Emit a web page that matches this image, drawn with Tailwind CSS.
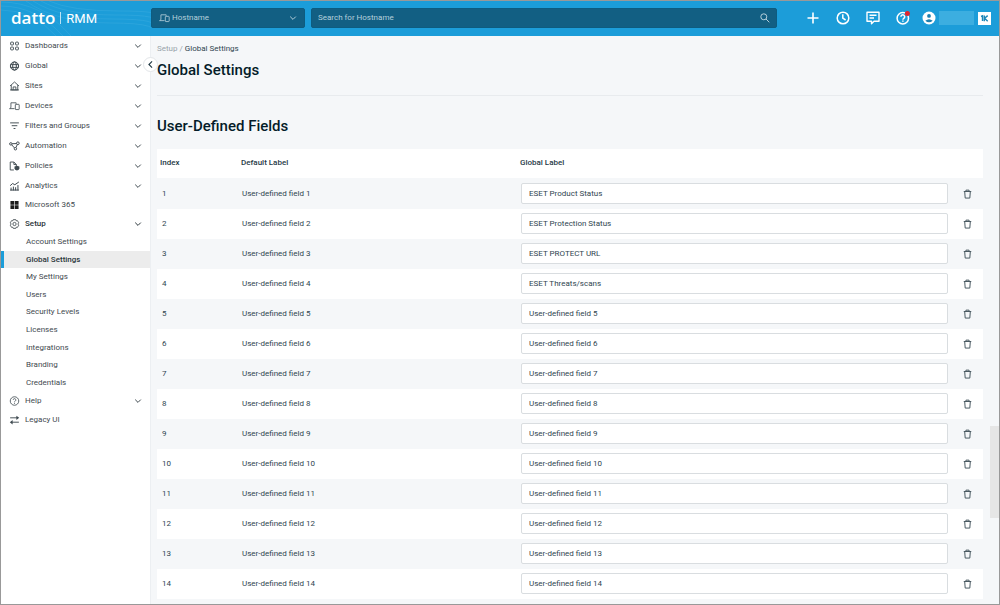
<!DOCTYPE html>
<html lang="en">
<head>
<meta charset="utf-8">
<title>Datto RMM - Global Settings</title>
<script src="https://cdn.jsdelivr.net/npm/@tailwindcss/browser@4"></script>
</head>
<body class="font-['Roboto',sans-serif] text-[8px] leading-[12px] text-[#2f4550]">
<svg class="hidden" xmlns="http://www.w3.org/2000/svg">
  <symbol id="chev" viewBox="0 0 8 8"><path d="M1.2 2.6 4 5.4 6.800 2.600" fill="none" stroke="currentColor" stroke-width="1"/></symbol>
  <symbol id="dash" viewBox="0 0 16 16"><g fill="none" stroke="currentColor" stroke-width="1.500"><rect x="1.800" y="1.800" width="4.500" height="4.500" rx="1"/><rect x="9.700" y="1.800" width="4.500" height="4.500" rx="1"/><rect x="1.800" y="9.700" width="4.500" height="4.500" rx="1"/><rect x="9.700" y="9.700" width="4.500" height="4.500" rx="1"/></g></symbol>
  <symbol id="globe" viewBox="0 0 16 16"><g fill="none" stroke="currentColor" stroke-width="1.600"><circle cx="8" cy="8" r="6.600"/><ellipse cx="8" cy="8" rx="3" ry="6.600"/><path d="M1.500 5.800h13M1.500 10.200h13"/></g></symbol>
  <symbol id="home" viewBox="0 0 16 16"><g fill="none" stroke="currentColor" stroke-width="1.400"><path d="M.8 8 8 1.600 15.200 8M2.800 6.500V14.300H13.200V6.500M.8 14.300h14.400"/><path d="M5.800 14v-4.500h4.400V14"/></g></symbol>
  <symbol id="devices" viewBox="0 0 20 16"><g fill="none" stroke="currentColor" stroke-width="1.500"><path d="M13 4V2.200H3.500V11M1 12.800h9M3.500 11l-2.500 1.800"/><rect x="11.500" y="5" width="7" height="9.500" rx="1"/></g></symbol>
  <symbol id="filter" viewBox="0 0 16 16"><path d="M1 3h14M3.500 7.500h9M6.500 12h3" fill="none" stroke="currentColor" stroke-width="1.500"/></symbol>
  <symbol id="auto" viewBox="0 0 18 16"><g fill="none" stroke="currentColor" stroke-width="1.600"><circle cx="3" cy="4.500" r="2"/><circle cx="14.500" cy="3.500" r="2.200"/><circle cx="10.500" cy="12.500" r="2"/><path d="M5 4.300 12.300 4M4.300 6 9 11.200M13.600 5.700 11.300 10.600"/></g></symbol>
  <symbol id="policy" viewBox="0 0 18 16"><g fill="none" stroke="currentColor" stroke-width="1.500"><path d="M8 14.500H2V1.500h6l4 4V8M8 1.500v4h4"/></g><path d="M13 7.500 17 9v2.500q0 3-4 4-4-1-4-4V9z" fill="currentColor"/></symbol>
  <symbol id="chart" viewBox="0 0 16 16"><g fill="none" stroke="currentColor" stroke-width="1.600"><path d="M1 7.500 5 4 8.500 6 15 1.500M2.500 10.500v4.500M6.200 9v6M9.800 10v5M13.500 6.500V15M1 14.500h14"/></g></symbol>
  <symbol id="win" viewBox="0 0 16 16"><path d="M1.500 1.500h6v6h-6zM8.500 1.500h6v6h-6zM1.500 8.500h6v6h-6zM8.500 8.500h6v6h-6z" fill="#1b1b1b"/></symbol>
  <symbol id="gear" viewBox="0 0 16 16"><g fill="none" stroke="currentColor" stroke-width="1.200" stroke-linejoin="round"><path d="M6 1h4l.7 1.900 2-.3 2 3.400L13.400 8l1.300 2-2 3.400-2-.3L10 15H6l-.7-1.900-2 .3-2-3.400L2.600 8 1.300 6l2-3.400 2 .3z"/><circle cx="8" cy="8" r="2.600"/></g></symbol>
  <symbol id="help" viewBox="0 0 16 16"><g fill="none" stroke="currentColor" stroke-width="1.300"><circle cx="8" cy="8" r="6.800"/><path d="M5.900 6.300a2.100 2.100 0 1 1 3.200 1.800Q8 8.700 8 9.900M8 11v1.500"/></g></symbol>
  <symbol id="swap" viewBox="0 0 16 16"><path d="M1 4.500h12M3 11.500h12" fill="none" stroke="currentColor" stroke-width="1.500"/><path d="M11 1l4.500 3.500L11 8zM5 8 .5 11.500 5 15z" fill="currentColor"/></symbol>
  <symbol id="trash" viewBox="0 0 14 16"><g fill="none" stroke="currentColor" stroke-width="1.600"><path d="M1 4h12M2.500 4 3.300 14.500h7.400L11.500 4M4.500 4V1.800h5V4"/></g></symbol>
</svg>
<div class="flex h-screen flex-col overflow-hidden border border-[#999999] bg-[#f5f7f9]">
  <header class="relative flex h-[35px] shrink-0 items-center bg-[#1c9dd9] pr-[8px] pb-px">
    <svg class="absolute left-0 top-0 h-[35px] w-[150px]" viewBox="0 0 150 35" fill="none" stroke="#47b2e3" stroke-width=".6" opacity=".6"><path d="M0 5Q35 5 62 35M0 9Q32 9 55 35M0 1Q40 1 70 35M25 0Q55 22 110 22T150 35M32 0Q60 18 112 18T150 28M40 0Q65 14 115 14T150 22M48 0Q70 10 118 10T150 16"/></svg>
    <a href="#" class="relative flex w-[150px] shrink-0 items-center pl-[10px] text-white" aria-label="datto RMM">
      <span class="font-['Open_Sans',sans-serif] text-[17px] leading-[20px] font-semibold">datto</span>
      <span class="ml-[5px] h-[12px] w-px bg-white/70"></span>
      <span class="ml-[5px] pt-[2px] text-[13px] leading-[20px]">RMM</span>
    </a>
    <button class="flex h-[20px] w-[154px] shrink-0 items-center rounded-[2px] border border-[#0d5c80] bg-[#125f83] px-[7px] text-[8px] text-[#b5cfdb]">
      <svg class="mr-[2px] h-[10px] w-[11px]"><use href="#devices"/></svg><span>Hostname</span>
      <svg class="ml-auto size-[8px]"><use href="#chev"/></svg>
    </button>
    <label class="ml-[6px] flex h-[20px] w-[466px] items-center rounded-[2px] border border-[#0d5c80] bg-[#125f83] px-[6px]">
      <input type="text" aria-label="Search for Hostname" placeholder="Search for Hostname" class="min-w-0 flex-1 bg-transparent text-[8px] text-white outline-none placeholder:text-[#b5cfdb]">
      <svg class="size-[10px] text-[#b5cfdb]" viewBox="0 0 10 10" fill="none" stroke="currentColor"><circle cx="3.800" cy="3.800" r="3"/><path d="M6 6 9.300 9.300"/></svg>
    </label>
    <div class="ml-auto flex items-center text-white">
      <button aria-label="Add" class="mr-[17px]"><svg class="size-[12px]" viewBox="0 0 12 12" stroke="currentColor" stroke-width="1.600"><path d="M6 .5v11M.5 6h11"/></svg></button>
      <button aria-label="Recent" class="mr-[16px]"><svg class="size-[14px]" viewBox="0 0 14 14" fill="none" stroke="currentColor" stroke-width="1.500"><circle cx="7" cy="7" r="5.800"/><path d="M6.800 3.200v4l2.800 1.800"/></svg></button>
      <button aria-label="Messages" class="mr-[16px]"><svg class="size-[14px]" viewBox="0 0 14 14" fill="none" stroke="currentColor" stroke-width="1.400"><path d="M1 1.300h12v9H8L5.500 12.800V10.300H1z" stroke-linejoin="round"/><path d="M3.500 4.300h7M3.500 7h4.500"/></svg></button>
      <button aria-label="Help" class="mr-[12px]"><svg class="size-[14px]" viewBox="0 0 14 14" fill="none" stroke="currentColor" stroke-width="1.500"><circle cx="6.800" cy="7.200" r="5.700"/><path d="M4.900 5.800a1.900 1.900 0 1 1 2.900 1.600Q6.900 8 6.900 8.700M6.900 9.500v1.300"/><circle cx="11.400" cy="2.600" r="2.500" fill="#e0262e" stroke="none"/></svg></button>
      <button aria-label="Account" class="flex items-center"><svg class="size-[14px]" viewBox="0 0 14 14"><circle cx="7" cy="7" r="6.500" fill="#fff"/><circle cx="7" cy="4.900" r="1.900" fill="#1c7fb0"/><path d="M3.300 9.800Q7 6.500 10.700 9.800 7 12.800 3.300 9.800" fill="#1c7fb0"/></svg><span class="ml-[3px] h-[14px] w-[35px] bg-[#3caee0]"></span></button>
      <button aria-label="Kaseya One" class="ml-[4px]"><svg class="size-[13px]" viewBox="0 0 13 13"><path d="M0 0h13v13H0z" fill="#fff"/><path d="M3 4.500 4.500 3.800V9M6.300 3.500V9.200M9.700 3.600 6.600 6.300 9.700 9.200" fill="none" stroke="#1c86b8" stroke-width="1.400"/></svg></button>
    </div>
  </header>
  <div class="relative flex min-h-0 flex-1">
    <nav id="nav" class="w-[149px] shrink-0 bg-white text-[#3f4a50]" aria-label="Main"></nav>
    <button aria-label="Collapse menu" class="absolute left-[142px] top-[21px] flex size-[15px] items-center justify-center rounded-full border border-[#e3e6e9] bg-white text-[#223a45]"><svg class="size-[9px] rotate-90"><use href="#chev"/></svg></button>
    <main class="min-w-0 flex-1 overflow-hidden border-l border-[#eceff2] pl-[6px] pr-[7px]">
      <div class="pt-[7px] text-[#98a3aa]"><a href="#">Setup</a> / <span class="text-[#2f4550]">Global Settings</span></div>
      <h1 class="mt-[5px] text-[15px] leading-[20px] font-medium text-[#041c29]">Global Settings</h1>
      <hr class="mt-[15px] border-[#e8ebee]">
      <h2 class="mt-[20px] text-[15px] leading-[20px] font-medium text-[#041c29]">User-Defined Fields</h2>
      <table class="mt-[13px] w-full table-fixed border-separate border-spacing-0 text-left">
        <thead><tr class="bg-white font-medium text-[#1f3a47]">
          <th class="h-[30px] w-[80px] border-b border-[#f5f7f9] pb-px pl-[3px] font-medium">Index</th>
          <th class="w-[282px] border-b border-[#f5f7f9] pb-px pl-[4px] font-medium">Default Label</th>
          <th class="border-b border-[#f5f7f9] pb-px pl-[1px] font-medium">Global Label</th>
          <th class="w-[35px] border-b border-[#f5f7f9]"></th>
        </tr></thead>
        <tbody id="rows"></tbody>
      </table>
    </main>
    <div class="flex w-[9px] shrink-0 flex-col"><div class="mt-[390px] h-[92px] bg-[#e6e6e6]"></div></div>
  </div>
</div>
<script>
const items = [
  ['dash','Dashboards',1,'h-[20px]'],['globe','Global',1,'h-[20px]'],['home','Sites',1,'h-[20px]'],['devices','Devices',1,'h-[20px]'],
  ['filter','Filters and Groups',1,'h-[20px]'],['auto','Automation',1,'h-[20px]'],['policy','Policies',1,'h-[20px]'],['chart','Analytics',1,'h-[20px]'],
  ['win','Microsoft 365',0,'h-[18px]'],['gear','Setup',1,'h-[19px] font-medium text-[#2b363b]'],['help','Help',1,'h-[20px]'],['swap','Legacy UI',0,'h-[18px]']
];
const subs = ['Account Settings','Global Settings','My Settings','Users','Security Levels','Licenses','Integrations','Branding','Credentials'];
document.getElementById('nav').innerHTML = items.map(([icon,label,chev,cls]) =>
  `<a href="#" class="flex items-center pl-[8px] pr-[8px] ${cls}"><svg class="mr-[5px] h-[10px] w-[11px]"><use href="#${icon}"/></svg>${label}${chev ? '<svg class="ml-auto size-[8px]"><use href="#chev"/></svg>' : ''}</a>` +
  (label === 'Setup' ? '<div class="grid h-[158px] auto-rows-fr">' + subs.map((s,i) =>
    `<a href="#" class="flex items-center pt-px ${i === 1 ? 'border-l-[3px] border-[#1c9dd9] bg-[#ececec] pl-[22px] font-medium text-[#2b363b]' : 'pl-[25px]'}">${s}</a>`).join('') + '</div>' : '')
).join('');
const named = ['ESET Product Status','ESET Protection Status','ESET PROTECT URL','ESET Threats/scans'];
document.getElementById('rows').innerHTML = Array.from({length:14}, (_,i) => {
  const n = i + 1;
  return `<tr class="even:bg-white"><td class="h-[30px] pl-[5px]">${n}</td><td class="pl-[5px]"><label for="f${n}">User-defined field ${n}</label></td><td class="pb-px pl-[2px]"><input id="f${n}" type="text" value="${named[i] || 'User-defined field ' + n}" class="block h-[21px] w-full rounded-[2px] border border-[#d9dde0] bg-white px-[7px] pb-px text-[8px] outline-none"></td><td class="pb-px"><button aria-label="Clear field ${n}" class="ml-[15px] block text-[#4b5b63]"><svg class="h-[10px] w-[9px]"><use href="#trash"/></svg></button></td></tr>`;
}).join('');
</script>
</body>
</html>
